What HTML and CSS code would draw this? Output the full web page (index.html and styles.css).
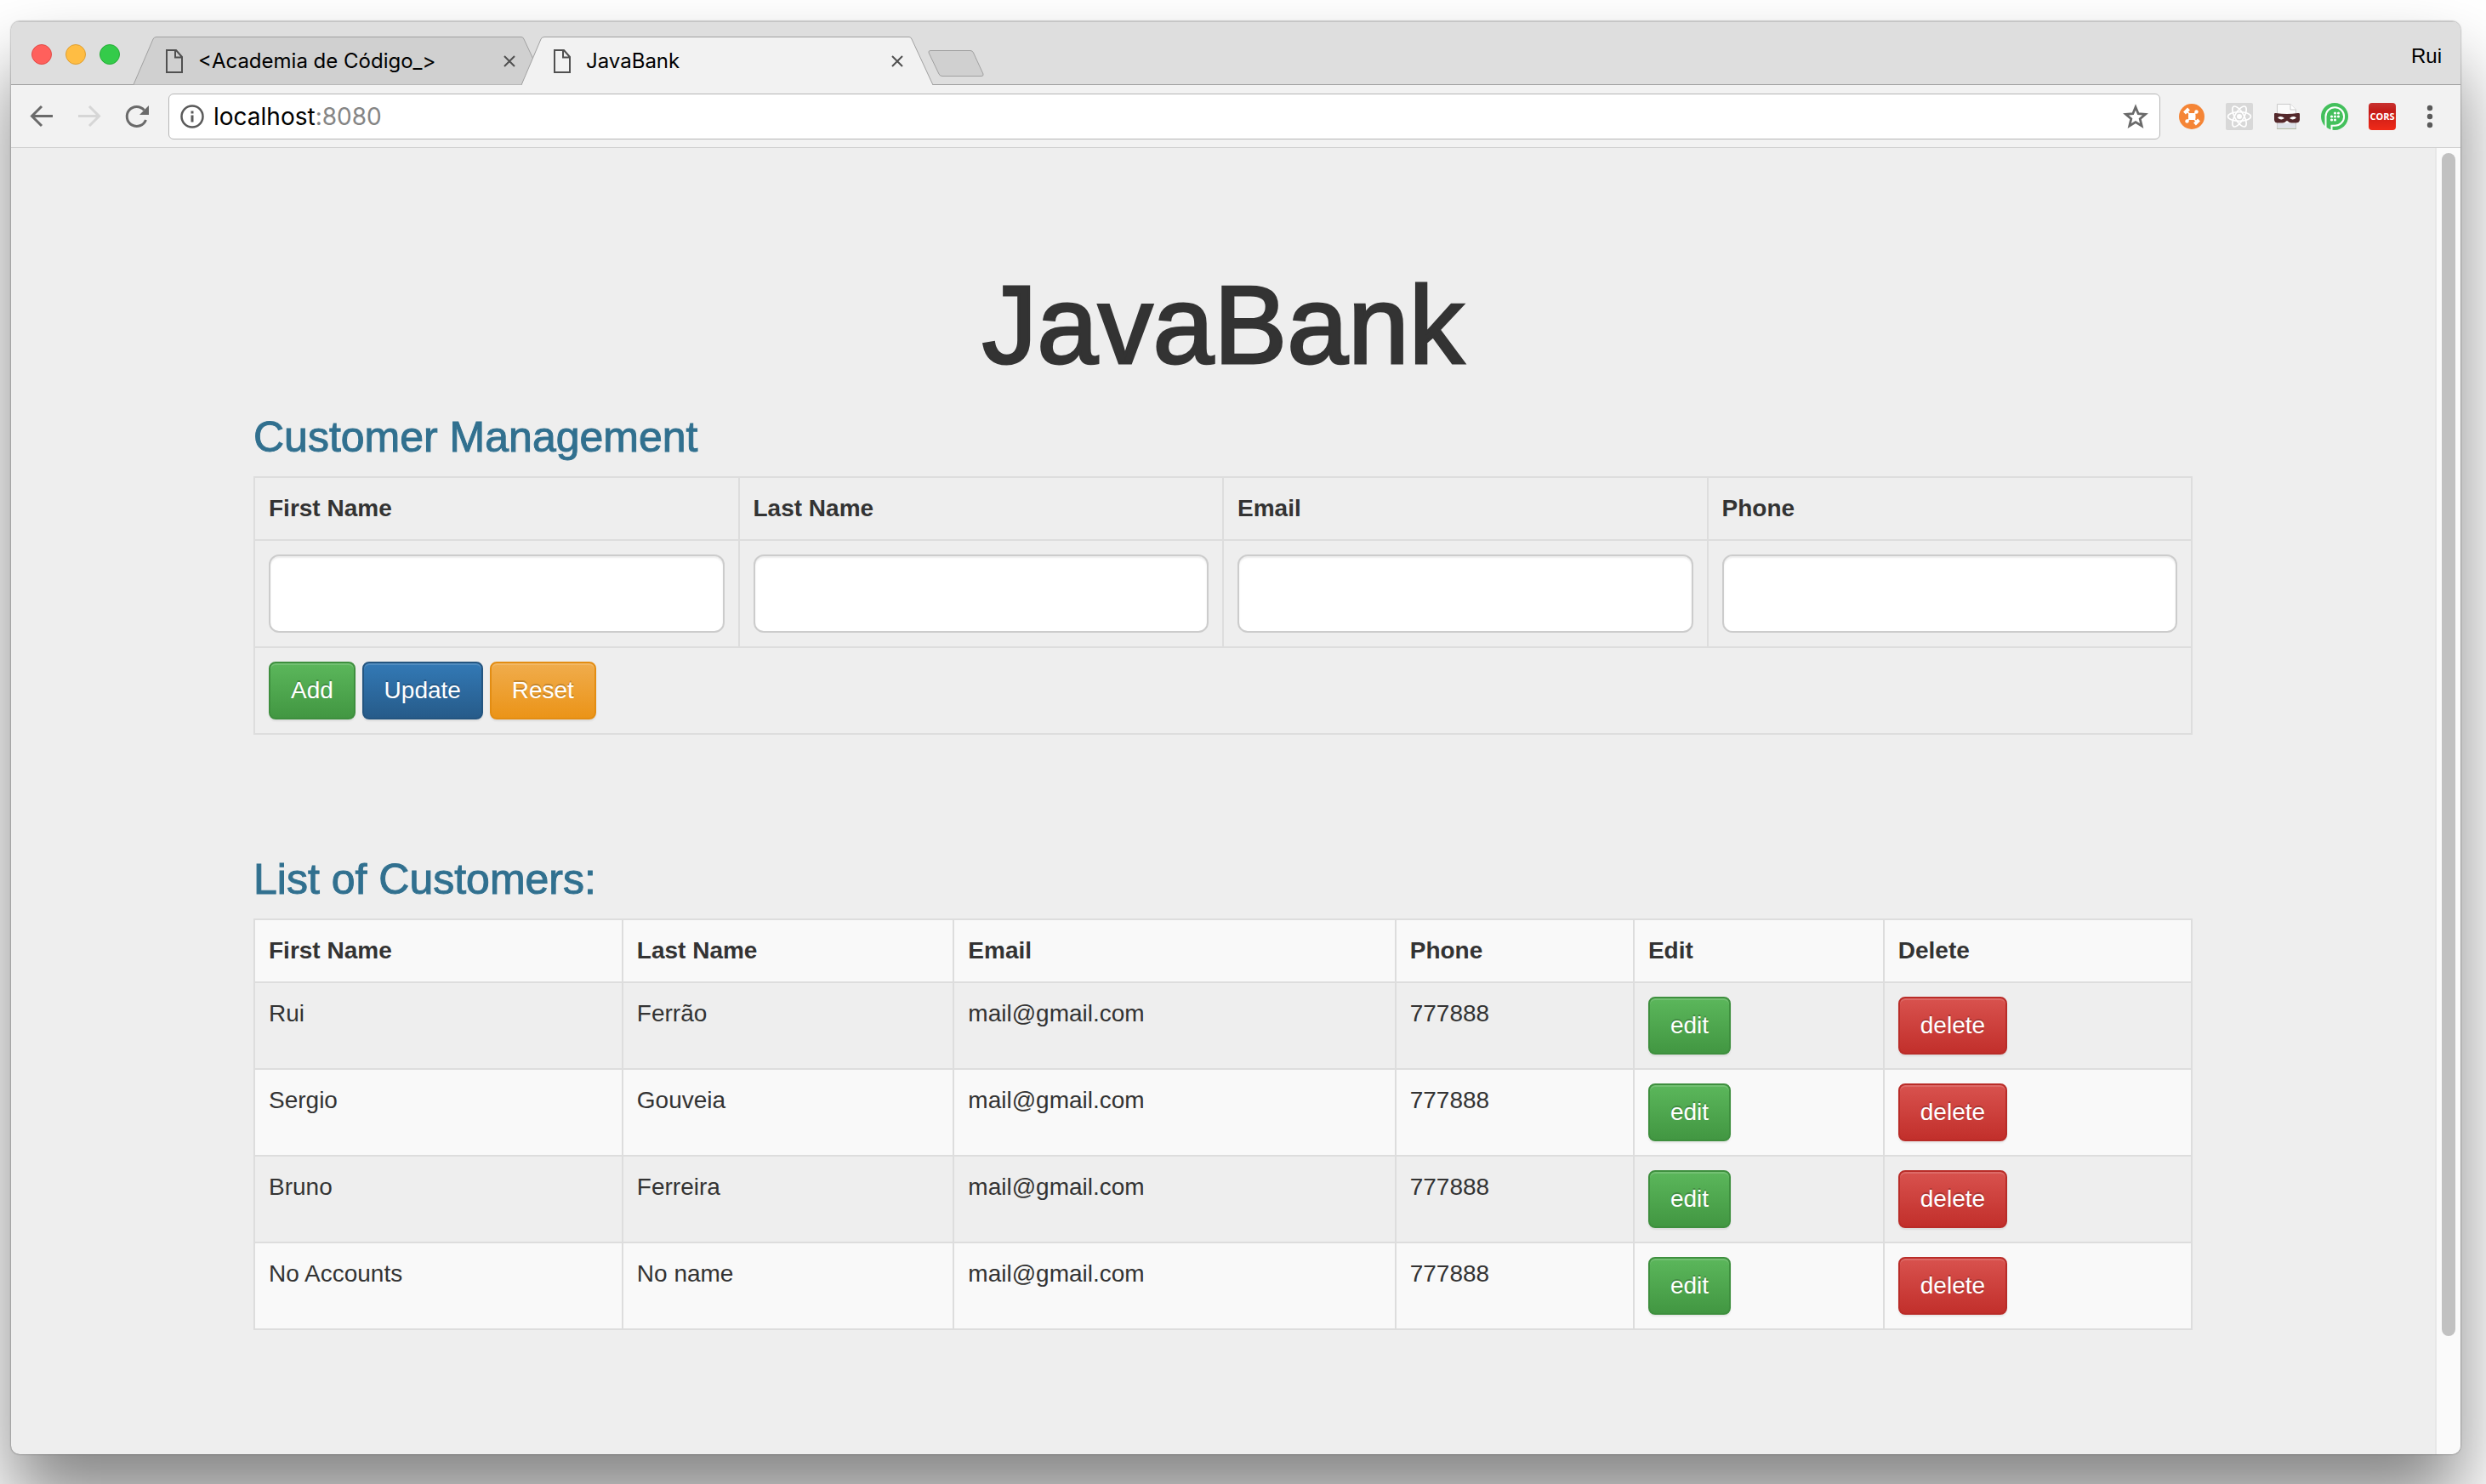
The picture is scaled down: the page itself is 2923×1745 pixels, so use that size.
FILE: index.html
```html
<!DOCTYPE html>
<html lang="en">
<head>
<meta charset="utf-8">
<title>JavaBank</title>
<link rel="stylesheet" href="styles.css">
</head>
<body>
<div class="window">
  <header class="tab-strip">
    <div class="lights">
      <button class="light light-close" aria-label="Close window"></button>
      <button class="light light-minimize" aria-label="Minimize window"></button>
      <button class="light light-zoom" aria-label="Zoom window"></button>
    </div>
    <div class="tabs">
      <div class="tab">
        <svg class="tab-shape" viewBox="0 0 484 57" preserveAspectRatio="none"><path d="M0 56.500L23 3Q24 .5 27 .5H456Q458 .5 459 3L484 56.500Z" fill="#d0d0d0"/><path d="M0 56.500L23 3Q24 .5 27 .5H456Q458 .5 459 3L484 56.500" fill="none" stroke="#a0a0a0"/></svg>
        <svg class="tab-icon" viewBox="0 0 20 28"><path d="M1 1H12L19 9V27H1ZM11 1V9.500H19" fill="none" stroke="#505050" stroke-width="2"/></svg>
        <span class="tab-title">&lt;Academia de Código_&gt;</span>
        <button class="tab-close" aria-label="Close tab"><svg viewBox="0 0 14 14"><path d="M1 1L13 13M13 1L1 13" stroke="#505050" stroke-width="2"/></svg></button>
      </div>
      <div class="tab tab-active">
        <svg class="tab-shape" viewBox="0 0 484 57" preserveAspectRatio="none"><path d="M0 57L23 3Q24 .5 27 .5H456Q458 .5 459 3L484 57Z" fill="#f2f2f2"/><path d="M0 57L23 3Q24 .5 27 .5H456Q458 .5 459 3L484 57" fill="none" stroke="#a0a0a0"/></svg>
        <svg class="tab-icon" viewBox="0 0 20 28"><path d="M1 1H12L19 9V27H1ZM11 1V9.500H19" fill="none" stroke="#505050" stroke-width="2"/></svg>
        <span class="tab-title">JavaBank</span>
        <button class="tab-close" aria-label="Close tab"><svg viewBox="0 0 14 14"><path d="M1 1L13 13M13 1L1 13" stroke="#505050" stroke-width="2"/></svg></button>
      </div>
    </div>
    <button class="new-tab" aria-label="New tab"><svg viewBox="0 0 66 32"><path d="M3 .5H50Q52.500 .5 53.500 3L65 28Q65.500 30.500 63 30.500H17Q14 30.500 13 28L1 3Q.5 .5 3 .5Z" fill="#d0d0d0" stroke="#a0a0a0"/></svg></button>
    <span class="profile">Rui</span>
  </header>

  <div class="toolbar">
    <nav class="tools">
      <button class="tool" aria-label="Back"><svg viewBox="0 0 32 32"><path d="M29 15.500H5M16 4L4.500 15.500L16 27" fill="none" stroke="#6a6a6a" stroke-width="3"/></svg></button>
      <button class="tool" aria-label="Forward"><svg viewBox="0 0 32 32"><path d="M3 15.500H27M16 4L27.500 15.500L16 27" fill="none" stroke="#d6d6d6" stroke-width="3"/></svg></button>
      <button class="tool" aria-label="Reload"><svg viewBox="0 0 32 32"><path d="M26.500 20A11.500 11.500 0 1 1 24.500 8.500" fill="none" stroke="#6a6a6a" stroke-width="3"/><path d="M30 3V14H19Z" fill="#6a6a6a"/></svg></button>
    </nav>
    <div class="address">
      <svg class="info" viewBox="0 0 28 28"><circle cx="14" cy="14" r="12.500" fill="none" stroke="#5a5a5a" stroke-width="2.500"/><path d="M14 7.500V10.500M14 12.500V20.500" stroke="#5a5a5a" stroke-width="3"/></svg>
      <span class="url">localhost<span class="port">:8080</span></span>
      <button class="star" aria-label="Bookmark this page"><svg viewBox="0 0 30 30"><path d="M15 4L18.200 11.700L26.500 12.400L20.200 17.800L22.200 26L15 21.600L7.800 26L9.800 17.800L3.500 12.400L11.800 11.700Z" fill="none" stroke="#6a6a6a" stroke-width="2.800"/></svg></button>
    </div>
    <div class="tools">
      <button class="tool" aria-label="Request tester"><svg viewBox="0 0 32 32"><circle cx="16" cy="16" r="15" fill="#f58536"/><path d="M7.500 12L12.500 7M19.500 25L24.500 20" stroke="#fff" stroke-width="4"/><path d="M10 9.500L22 22.500M21.500 10.500L10.500 21.500" stroke="#fff" stroke-width="1.600"/><rect x="12" y="12" width="8.500" height="8" rx="2" fill="#fff"/><circle cx="21.500" cy="10.500" r="2.200" fill="#fff"/><circle cx="10.500" cy="21.500" r="2.200" fill="#fff"/></svg></button>
      <button class="tool" aria-label="React developer tools"><svg viewBox="0 0 32 32"><rect width="32" height="32" rx="2" fill="#d8d8d8"/><g fill="none" stroke="#fff" stroke-width="1.700"><ellipse cx="16" cy="16" rx="13.500" ry="5.300"/><ellipse cx="16" cy="16" rx="13.500" ry="5.300" transform="rotate(60 16 16)"/><ellipse cx="16" cy="16" rx="13.500" ry="5.300" transform="rotate(120 16 16)"/></g><circle cx="16" cy="16" r="3" fill="#fff"/></svg></button>
      <button class="tool" aria-label="Private pages"><svg viewBox="0 0 32 32"><path d="M4.500 1.500H20L26.500 8V30H4.500Z" fill="#fafafa" stroke="#c9c9c9"/><path d="M20 1.500V8H26.500" fill="#fff" stroke="#c9c9c9"/><path d="M5 24H26V29H5Z" fill="#dfe3ea"/><path d="M4 30.500H27" stroke="#b4bda8"/><path d="M1 13Q1 11.500 3 12Q16 14 28.500 12Q31 11.500 31 13V20Q30.500 23.500 26 23.500H21Q18.500 23.500 17 21.500Q16 20.500 15 21.500Q13.500 23.500 11 23.500H5Q1.500 23.500 1 20Z" fill="#54282b"/><path d="M5 17.500Q8.500 14.500 13 18Q9 21 5 17.500ZM27 17.500Q23.500 14.500 19 18Q23 21 27 17.500Z" fill="#fff"/></svg></button>
      <button class="tool" aria-label="Push messages"><svg viewBox="0 0 32 32"><circle cx="16" cy="16" r="16" fill="#43c05c"/><path d="M5.500 29V16A10.800 10.800 0 1 1 16 26.800H12.500V32" fill="none" stroke="#fff" stroke-width="2"/><g fill="#fff"><circle cx="16.500" cy="12" r="1.600"/><circle cx="20.500" cy="12" r="1.600"/><circle cx="12.500" cy="16" r="1.600"/><circle cx="16.500" cy="16" r="1.600"/><circle cx="20.500" cy="16" r="1.600"/><circle cx="12.500" cy="20" r="1.600"/><circle cx="16.500" cy="20" r="1.600"/></g></svg></button>
      <button class="tool cors">CORS</button>
      <button class="tool" aria-label="Menu"><svg viewBox="0 0 32 32"><g fill="#5a5a5a"><circle cx="16" cy="6" r="3.200"/><circle cx="16" cy="16" r="3.200"/><circle cx="16" cy="26" r="3.200"/></g></svg></button>
    </div>
  </div>

  <div class="viewport">
    <main class="page">
      <h1>JavaBank</h1>
      <section>
        <h2>Customer Management</h2>
        <form>
          <table class="form-table">
            <tr>
              <th><label for="first-name">First Name</label></th>
              <th><label for="last-name">Last Name</label></th>
              <th><label for="email">Email</label></th>
              <th><label for="phone">Phone</label></th>
            </tr>
            <tr>
              <td><input id="first-name" type="text"></td>
              <td><input id="last-name" type="text"></td>
              <td><input id="email" type="text"></td>
              <td><input id="phone" type="text"></td>
            </tr>
            <tr>
              <td colspan="4">
                <button type="button" class="btn btn-success">Add</button>
                <button type="button" class="btn btn-primary">Update</button>
                <button type="reset" class="btn btn-warning">Reset</button>
              </td>
            </tr>
          </table>
        </form>
      </section>
      <section class="customers">
        <h2>List of Customers:</h2>
        <table class="striped">
          <colgroup><col class="col-first"><col class="col-last"><col class="col-email"><col class="col-phone"><col class="col-edit"><col></colgroup>
          <tr><th>First Name</th><th>Last Name</th><th>Email</th><th>Phone</th><th>Edit</th><th>Delete</th></tr>
          <tr><td>Rui</td><td>Ferrão</td><td>mail@gmail.com</td><td>777888</td><td><button class="btn btn-success">edit</button></td><td><button class="btn btn-danger">delete</button></td></tr>
          <tr><td>Sergio</td><td>Gouveia</td><td>mail@gmail.com</td><td>777888</td><td><button class="btn btn-success">edit</button></td><td><button class="btn btn-danger">delete</button></td></tr>
          <tr><td>Bruno</td><td>Ferreira</td><td>mail@gmail.com</td><td>777888</td><td><button class="btn btn-success">edit</button></td><td><button class="btn btn-danger">delete</button></td></tr>
          <tr><td>No Accounts</td><td>No name</td><td>mail@gmail.com</td><td>777888</td><td><button class="btn btn-success">edit</button></td><td><button class="btn btn-danger">delete</button></td></tr>
        </table>
      </section>
    </main>
    <div class="scrollbar"><div class="thumb"></div></div>
  </div>
</div>
</body>
</html>
```
FILE: styles.css
```css
* { box-sizing: border-box; }

body {
  margin: 0;
  min-height: 100vh;
  padding: 25px 30px 35px 13px;
  display: flex;
  background: #fff;
  color: #333;
  font-family: "Liberation Sans", Arial, sans-serif;
  font-size: 28px;
  line-height: 40px;
}

button { font: inherit; cursor: pointer; }
svg { display: block; }

/* Browser window */
.window {
  flex: 1;
  display: flex;
  flex-direction: column;
  border-radius: 10px;
  overflow: hidden;
  background: #eee;
  box-shadow: 0 0 2px rgba(0, 0, 0, .6), 0 56px 88px rgba(0, 0, 0, .48);
}

.tab-strip {
  display: flex;
  align-items: flex-end;
  height: 75px;
  padding: 0 22px 0 24px;
  background: #dedede;
  border-top: 1px solid #c4c4c4;
  box-shadow: inset 0 -1px #a0a0a0;
}

.lights {
  display: flex;
  align-self: center;
  gap: 16px;
  width: 120px;
  padding-top: 2px;
}

.light {
  width: 24px;
  height: 24px;
  padding: 0;
  border: 1px solid;
  border-radius: 50%;
}
.light-close { background: #ff605c; border-color: #e24b47; }
.light-minimize { background: #ffbd43; border-color: #dfa033; }
.light-zoom { background: #34cb4a; border-color: #27ae37; }

.tabs { display: flex; }

.tab {
  position: relative;
  display: flex;
  align-items: center;
  gap: 18px;
  width: 484px;
  height: 57px;
  padding: 0 35px 0 38px;
  color: #000;
  font-family: Inter, "Open Sans", sans-serif;
  font-size: 24px;
}
.tab-active { margin-left: -28px; }
.tab-shape { position: absolute; inset: 0; width: 100%; height: 100%; }
.tab-icon { position: relative; width: 20px; height: 28px; }
.tab-title { position: relative; flex: 1; white-space: nowrap; }

.tab-close {
  position: relative;
  padding: 0;
  border: 0;
  background: none;
}
.tab-close svg { width: 14px; height: 14px; }

.new-tab {
  margin: 0 0 9px -6px;
  padding: 0;
  border: 0;
  background: none;
}
.new-tab svg { width: 66px; height: 32px; }

.profile {
  align-self: center;
  margin-left: auto;
  padding-top: 6px;
  color: #000;
  font-size: 24px;
  line-height: 28px;
}

.toolbar {
  display: flex;
  align-items: center;
  gap: 21px;
  height: 74px;
  padding: 0 20px;
  background: #f2f2f2;
  border-bottom: 1px solid #d0d0d0;
}

.tools { display: flex; gap: 24px; }

.tool {
  width: 32px;
  height: 32px;
  padding: 0;
  border: 0;
  background: none;
}

.tool.cors {
  border-radius: 4px;
  background: linear-gradient(#c83230, #c41c18 30%, #f02a18);
  color: #fff;
  font-family: "Open Sans", sans-serif;
  font-size: 11px;
  font-weight: 700;
  line-height: 32px;
}

.address {
  flex: 1;
  display: flex;
  align-items: center;
  gap: 11px;
  height: 54px;
  padding: 0 13px;
  background: #fff;
  border: 1px solid #b6b6b6;
  border-radius: 6px;
}
.info { width: 28px; height: 28px; }
.url { flex: 1; color: #000; font-family: Inter, "Open Sans", sans-serif; }
.port { color: #858585; }
.star { padding: 0; border: 0; background: none; }
.star svg { width: 30px; height: 30px; }

/* Page area */
.viewport { flex: 1; display: flex; }

.page {
  flex: 1;
  padding: 138px 5% 96px;
}
.page > * { max-width: 2280px; margin-inline: auto; }

.scrollbar {
  display: flex;
  flex-direction: column;
  width: 30px;
  padding: 6px;
  background: #fafafa;
  border-left: 2px solid #e7e7e7;
}
.scrollbar::after { content: ""; flex: 2; }
.thumb { flex: 21; width: 16px; border-radius: 8px; background: #c1c1c1; }

h1 {
  margin: 0 0 36px;
  text-align: center;
  font-size: 129px;
  font-weight: 400;
  line-height: 140px;
  -webkit-text-stroke: 3px #333;
}

h2 {
  margin: 0 0 20px;
  color: #31708f;
  font-size: 50px;
  font-weight: 400;
  line-height: 52px;
  -webkit-text-stroke: 1px #31708f;
}

.customers { margin-top: 144px; }

table { width: 100%; border-collapse: collapse; table-layout: fixed; }

th, td {
  padding: 16px;
  border: 2px solid #ddd;
  text-align: left;
  vertical-align: top;
}

.striped tr:nth-child(odd) { background: #f9f9f9; }
.col-first { width: 19%; }
.col-last { width: 17.1%; }
.col-email { width: 22.8%; }
.col-phone { width: 12.3%; }
.col-edit { width: 12.9%; }

input {
  display: block;
  width: 100%;
  height: 92px;
  padding: 20px 32px;
  border: 2px solid #ccc;
  border-radius: 12px;
  background: #fff;
  box-shadow: inset 0 2px 2px rgba(0, 0, 0, .075);
  font: inherit;
}

.btn {
  padding: 12px 24px;
  border: 2px solid;
  border-radius: 8px;
  color: #fff;
  line-height: 40px;
  vertical-align: top;
  text-shadow: 0 -2px 0 rgba(0, 0, 0, .2);
  box-shadow: inset 0 2px 0 rgba(255, 255, 255, .15), 0 2px 2px rgba(0, 0, 0, .075);
}
.btn-success { background: linear-gradient(#5cb85c, #419641) border-box; border-color: #3e8f3e; }
.btn-primary { background: linear-gradient(#337ab7, #265a88) border-box; border-color: #245580; }
.btn-warning { background: linear-gradient(#f0ad4e, #eb9316) border-box; border-color: #e38d13; }
.btn-danger { background: linear-gradient(#d9534f, #c12e2a) border-box; border-color: #b92c28; }
```
